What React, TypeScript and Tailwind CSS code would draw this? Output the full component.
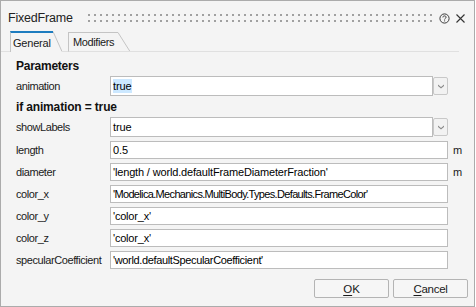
import React from "react";

const font = "font-['Liberation_Sans',Arial,sans-serif]";

function Combo({ value, highlight }: { value: string; highlight?: boolean }) {
  return (
    <div className="flex h-[20px] w-[338px]">
      <div className="flex h-[20px] w-[323px] items-center border border-[#bcbcbc] bg-white pl-[2px]">
        <span
          className={`text-[11px] leading-[14px] tracking-[-0.1px] text-black ${
            highlight ? "bg-[#cce8ff]" : ""
          }`}
        >
          {value}
        </span>
      </div>
      <div className="mt-[1px] flex h-[18px] w-[15px] items-center justify-center rounded-[2px] border border-[#c8c8c8] bg-[#f2f2f2]">
        <svg width="6" height="5" viewBox="0 0 6 5">
          <path d="M0 0.5 L3 3 L6 0.5 L6 2 L3 4.5 L0 2Z" fill="#8a8a8a" />
        </svg>
      </div>
    </div>
  );
}

function Field({ value, tracking }: { value: string; tracking: string }) {
  return (
    <div className="flex h-[18px] w-[338px] items-center border border-[#bcbcbc] bg-white pl-[2px]">
      <span className={`whitespace-nowrap text-[11px] leading-[14px] text-black ${tracking}`}>{value}</span>
    </div>
  );
}

function Label({ text }: { text: string }) {
  return (
    <div className="w-[94px] whitespace-nowrap text-[11px] leading-[14px] tracking-[-0.42px] text-[#1a1a1a]">
      {text}
    </div>
  );
}

export default function App() {
  const rows: { label: string; value: string; tracking: string; unit?: string }[] = [
    { label: "length", value: "0.5", tracking: "tracking-[-0.1px]", unit: "m" },
    {
      label: "diameter",
      value: "'length / world.defaultFrameDiameterFraction'",
      tracking: "tracking-[-0.16px]",
      unit: "m",
    },
    {
      label: "color_x",
      value: "'Modelica.Mechanics.MultiBody.Types.Defaults.FrameColor'",
      tracking: "tracking-[-0.66px]",
    },
    { label: "color_y", value: "'color_x'", tracking: "tracking-[-0.2px]" },
    { label: "color_z", value: "'color_x'", tracking: "tracking-[-0.2px]" },
    {
      label: "specularCoefficient",
      value: "'world.defaultSpecularCoefficient'",
      tracking: "tracking-[-0.35px]",
    },
  ];

  return (
    <div className={`h-[307px] w-[476px] bg-white ${font}`}>
      <div className="flex h-[307px] w-[475px] flex-col border border-[#ababab] bg-[#f4f4f4]">
        {/* Title bar */}
        <div className="flex h-[30px] items-center pl-[7px] pt-[4px]">
          <div className="w-[80px] text-[12.5px] leading-[16px] tracking-[-0.2px] text-[#222]">FixedFrame</div>
          <svg width="344" height="9" className="shrink-0">
            <defs>
              <pattern id="dots" width="6" height="6" patternUnits="userSpaceOnUse">
                <rect x="0" y="0" width="2" height="2" fill="#a0a0a0" />
              </pattern>
            </defs>
            <rect x="0" y="0" width="344" height="8" fill="url(#dots)" />
          </svg>
          <svg width="11" height="11" viewBox="0 0 11 11" className="ml-[7px] shrink-0">
            <circle cx="5.5" cy="5.5" r="4.6" fill="none" stroke="#3a3a3a" strokeWidth="1" />
            <path
              d="M3.9 4.4 C3.9 3.4 4.6 2.9 5.5 2.9 C6.4 2.9 7.1 3.4 7.1 4.3 C7.1 5.2 5.6 5.4 5.6 6.5"
              fill="none"
              stroke="#3a3a3a"
              strokeWidth="1"
            />
            <rect x="5.1" y="7.4" width="1" height="1" fill="#3a3a3a" />
          </svg>
          <svg width="9" height="9" viewBox="0 0 9 9" className="ml-[6px] shrink-0">
            <path d="M0.5 0.5 L8.5 8.5 M8.5 0.5 L0.5 8.5" stroke="#333" strokeWidth="1.1" />
          </svg>
        </div>

        {/* Tabs */}
        <div className="flex h-[21px] items-end pr-[15px]">
          <div className="h-[21px] w-[9px] border-b border-[#e0e0e0]" />
          <div className="flex h-[21px] w-[43px] items-center border-l border-t-2 border-l-[#c4c4c4] border-t-[#1d7cbf] pl-[2px]">
            <span className="text-[11px] leading-[14px] tracking-[-0.2px] text-[#1a1a1a]">General</span>
          </div>
          <svg width="9" height="21" className="shrink-0">
            <path d="M0 0.5 L9 20.5" stroke="#c4c4c4" strokeWidth="1" fill="none" />
          </svg>
          <div className="h-[21px] w-[6px] border-b border-[#e0e0e0]" />
          <div className="flex h-[20px] w-[50px] items-center border-b border-l border-t border-b-[#e0e0e0] border-l-[#c4c4c4] border-t-[#c4c4c4] pl-[4px]">
            <span className="whitespace-nowrap text-[11px] leading-[14px] tracking-[-0.4px] text-[#1a1a1a]">
              Modifiers
            </span>
          </div>
          <svg width="12" height="20" className="shrink-0">
            <path d="M0 0.5 L12 19.5" stroke="#c4c4c4" strokeWidth="1" fill="none" />
            <path d="M0 19.5 L12 19.5" stroke="#e0e0e0" strokeWidth="1" fill="none" />
          </svg>
          <div className="h-[21px] flex-1 border-b border-[#e0e0e0]" />
        </div>

        {/* Content */}
        <div className="flex flex-col pl-[15px] pt-[6px]">
          <div className="text-[12px] font-bold leading-[16px] tracking-[-0.25px] text-[#111]">Parameters</div>
          <div className="mt-[2px] flex items-center">
            <Label text="animation" />
            <Combo value="true" highlight />
          </div>
          <div className="mt-[3px] text-[12px] font-bold leading-[16px] tracking-[-0.15px] text-[#111]">
            if animation = true
          </div>
          <div className="mt-[2px] flex items-center">
            <Label text="showLabels" />
            <Combo value="true" />
          </div>
          <div className="mt-[4px] flex flex-col gap-[4px]">
            {rows.map((r) => (
              <div key={r.label} className="flex items-center">
                <Label text={r.label} />
                <Field value={r.value} tracking={r.tracking} />
                {r.unit && (
                  <span className="ml-[5px] text-[11px] leading-[14px] text-[#1a1a1a]">{r.unit}</span>
                )}
              </div>
            ))}
          </div>
        </div>

        {/* Buttons */}
        <div className="mt-[10px] flex justify-end gap-[4px] pr-[6px]">
          <button className="flex h-[19px] w-[75px] items-center justify-center rounded-[2px] border border-[#b4b4b4] bg-[#f6f6f6] text-[11.5px] leading-[14px] text-[#1a1a1a]">
            <span>
              <span className="underline underline-offset-[2px]">O</span>K
            </span>
          </button>
          <button className="flex h-[19px] w-[75px] items-center justify-center rounded-[2px] border border-[#b4b4b4] bg-[#f6f6f6] text-[11.5px] leading-[14px] tracking-[-0.3px] text-[#1a1a1a]">
            <span>
              <span className="underline underline-offset-[2px]">C</span>ancel
            </span>
          </button>
        </div>
      </div>
    </div>
  );
}
